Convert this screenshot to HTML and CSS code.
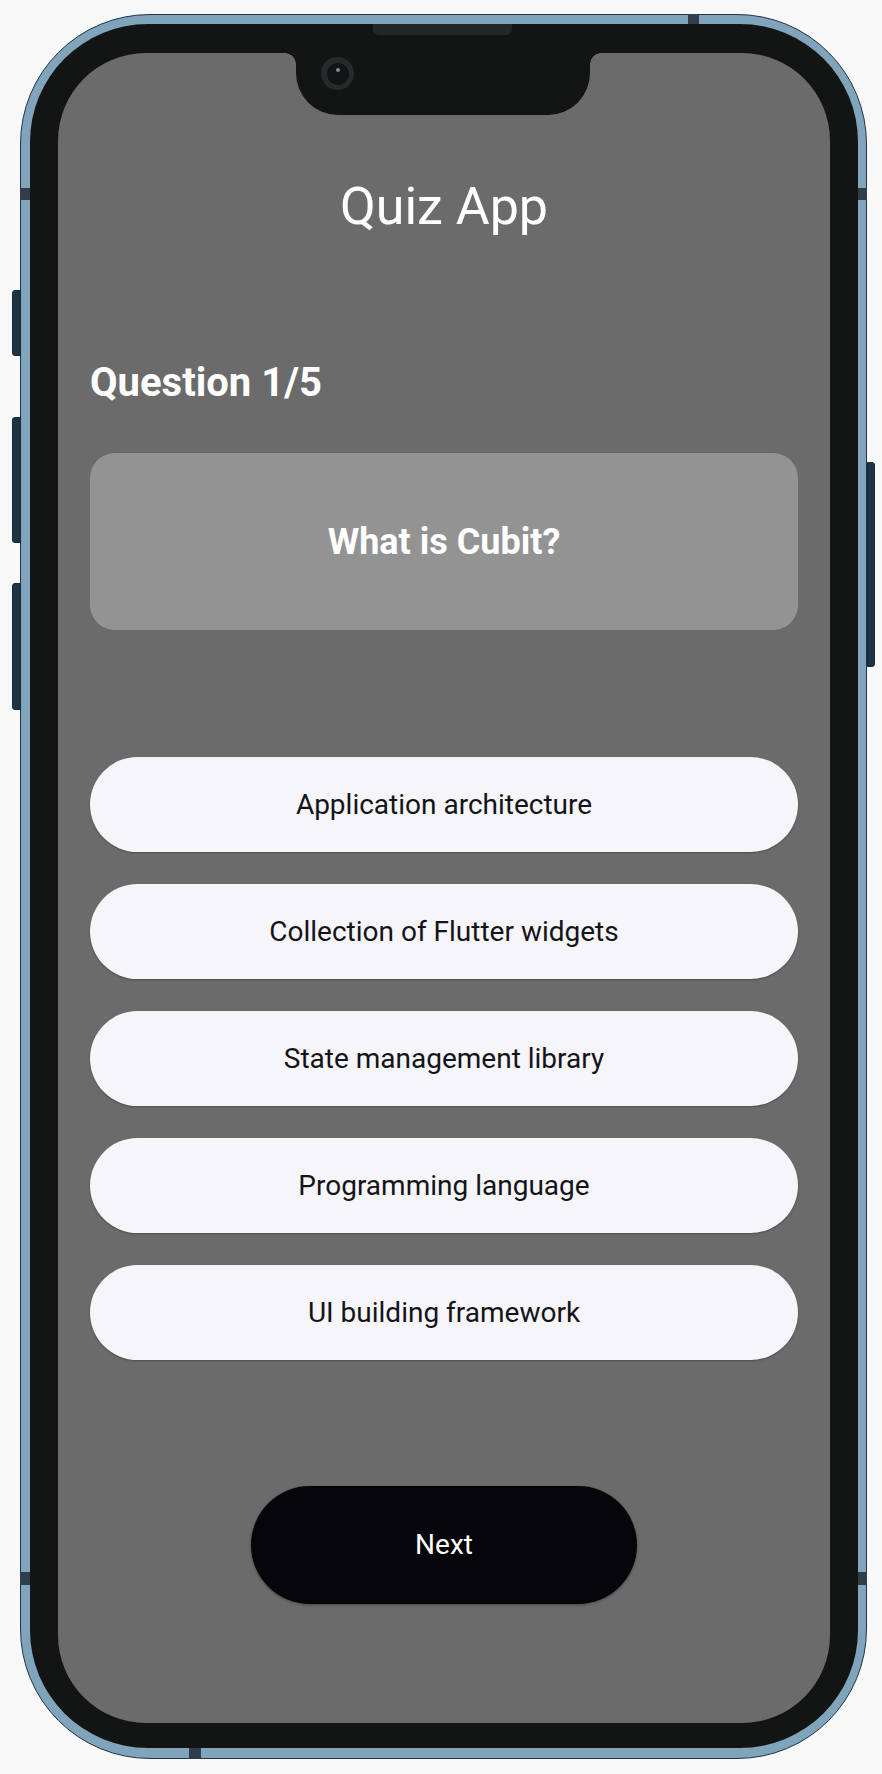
FILE: index.html
```html
<!DOCTYPE html>
<html lang="en">
<head>
<meta charset="utf-8">
<title>Quiz App</title>
<link rel="stylesheet" href="styles.css">
</head>
<body>
<div class="device">
  <span class="side-btn side-btn-left side-btn-1"></span>
  <span class="side-btn side-btn-left side-btn-2"></span>
  <span class="side-btn side-btn-left side-btn-3"></span>
  <span class="side-btn side-btn-right"></span>
  <span class="band band-top"></span>
  <span class="band band-left-top"></span>
  <span class="band band-right-top"></span>
  <span class="band band-left-bottom"></span>
  <span class="band band-right-bottom"></span>
  <span class="band band-bottom"></span>
  <div class="bezel">
    <div class="speaker"></div>
    <div class="screen">
      <div class="notch"><span class="camera"><span class="camera-lens"></span><span class="camera-dot"></span></span></div>
      <h1 class="title">Quiz App</h1>
      <h2 class="counter">Question 1/5</h2>
      <div class="question-card"><p class="question-text">What is Cubit?</p></div>
      <div class="options">
        <button class="option">Application architecture</button>
        <button class="option">Collection of Flutter widgets</button>
        <button class="option">State management library</button>
        <button class="option">Programming language</button>
        <button class="option">UI building framework</button>
      </div>
      <div class="actions"><button class="next">Next</button></div>
    </div>
  </div>
</div>
</body>
</html>
```

FILE: styles.css
```css
* { box-sizing: border-box; }
html, body { margin: 0; padding: 0; }
body {
  background: #f8f8f8;
  font-family: Roboto, "Noto Sans", "Liberation Sans", sans-serif;
  width: 882px;
  height: 1774px;
  overflow: hidden;
}

.device {
  position: relative;
  margin: 14px 0 0 20px;
  width: 847px;
  height: 1745px;
  border: 1px solid #1f3445;
  border-radius: 130px;
  background: #80a4bc;
  padding: 9px 8px 10px 9px;
}

.side-btn {
  position: absolute;
  background: #1e3343;
  border: 1px solid #172836;
}
.side-btn-left { left: -9px; width: 9px; border-radius: 3px 0 0 3px; }
.side-btn-1 { top: 275px; height: 66px; }
.side-btn-2 { top: 402px; height: 126px; }
.side-btn-3 { top: 568px; height: 127px; }
.side-btn-right { left: 846px; width: 8px; top: 447px; height: 205px; border-radius: 0 3px 3px 0; }

.band { position: absolute; background: #2f3e4a; }
.band-top { left: 667px; top: -1px; width: 11px; height: 10px; }
.band-left-top { left: -1px; top: 173px; width: 10px; height: 12px; }
.band-right-top { left: 837px; top: 173px; width: 9px; height: 12px; }
.band-left-bottom { left: -1px; top: 1557px; width: 10px; height: 13px; }
.band-right-bottom { left: 837px; top: 1557px; width: 9px; height: 13px; }
.band-bottom { left: 168px; top: 1733px; width: 12px; height: 11px; }

.bezel {
  position: relative;
  height: 100%;
  background: #131514;
  border-radius: 118px;
  padding: 29px 28px 25px 28px;
}

.speaker {
  position: absolute;
  left: 343px;
  top: 0;
  width: 139px;
  height: 11px;
  background: #222828;
  border-radius: 0 0 6px 6px;
}

.screen {
  position: relative;
  height: 100%;
  background: #6b6b6b;
  border-radius: 88px;
  padding: 0 32px;
  display: flex;
  flex-direction: column;
}

.notch {
  position: absolute;
  left: 238px;
  top: 0;
  width: 294px;
  height: 62px;
  background: #131514;
  border-radius: 0 0 42px 42px;
}
.notch::before,
.notch::after {
  content: "";
  position: absolute;
  top: 0;
  width: 11px;
  height: 11px;
}
.notch::before {
  left: -11px;
  background: radial-gradient(circle at 0 100%, transparent 10.5px, #131514 11px);
}
.notch::after {
  right: -11px;
  background: radial-gradient(circle at 100% 100%, transparent 10.5px, #131514 11px);
}

.camera {
  position: absolute;
  left: 25px;
  top: 4px;
  width: 33px;
  height: 33px;
  border-radius: 50%;
  background: #252b2d;
}
.camera-lens {
  position: absolute;
  left: 5.5px;
  top: 5.5px;
  width: 22px;
  height: 22px;
  border-radius: 50%;
  background: #121516;
}
.camera-dot {
  position: absolute;
  left: 14.5px;
  top: 10.5px;
  width: 4px;
  height: 4px;
  border-radius: 50%;
  background: #7f8c91;
}

.title {
  margin: 128px 0 0;
  font-size: 52px;
  line-height: 52px;
  font-weight: 400;
  color: #ffffff;
  text-align: center;
}

.counter {
  margin: 130px 0 0;
  font-size: 40px;
  line-height: 40px;
  font-weight: 700;
  color: #ffffff;
}

.question-card {
  margin-top: 50px;
  height: 177px;
  border-radius: 25px;
  background: #939393;
  display: flex;
  align-items: center;
  justify-content: center;
}
.question-text {
  margin: 0;
  font-size: 36px;
  line-height: 36px;
  font-weight: 700;
  color: #ffffff;
}

.options {
  margin-top: 127px;
  display: flex;
  flex-direction: column;
  gap: 32px;
}
.option {
  height: 95px;
  border: none;
  border-radius: 48px;
  background: #f5f5fa;
  font-family: inherit;
  font-size: 28px;
  line-height: 28px;
  font-weight: 400;
  color: #141418;
  box-shadow: 0 1px 2px rgba(0, 0, 0, 0.28);
  padding: 0;
}

.actions {
  margin-top: 126px;
  display: flex;
  justify-content: center;
}
.next {
  width: 386px;
  height: 118px;
  border: none;
  border-radius: 59px;
  background: #05050a;
  color: #ffffff;
  font-family: inherit;
  font-size: 28px;
  line-height: 28px;
  font-weight: 400;
  box-shadow: 0 1px 3px rgba(0, 0, 0, 0.35);
  padding: 0;
}
```
